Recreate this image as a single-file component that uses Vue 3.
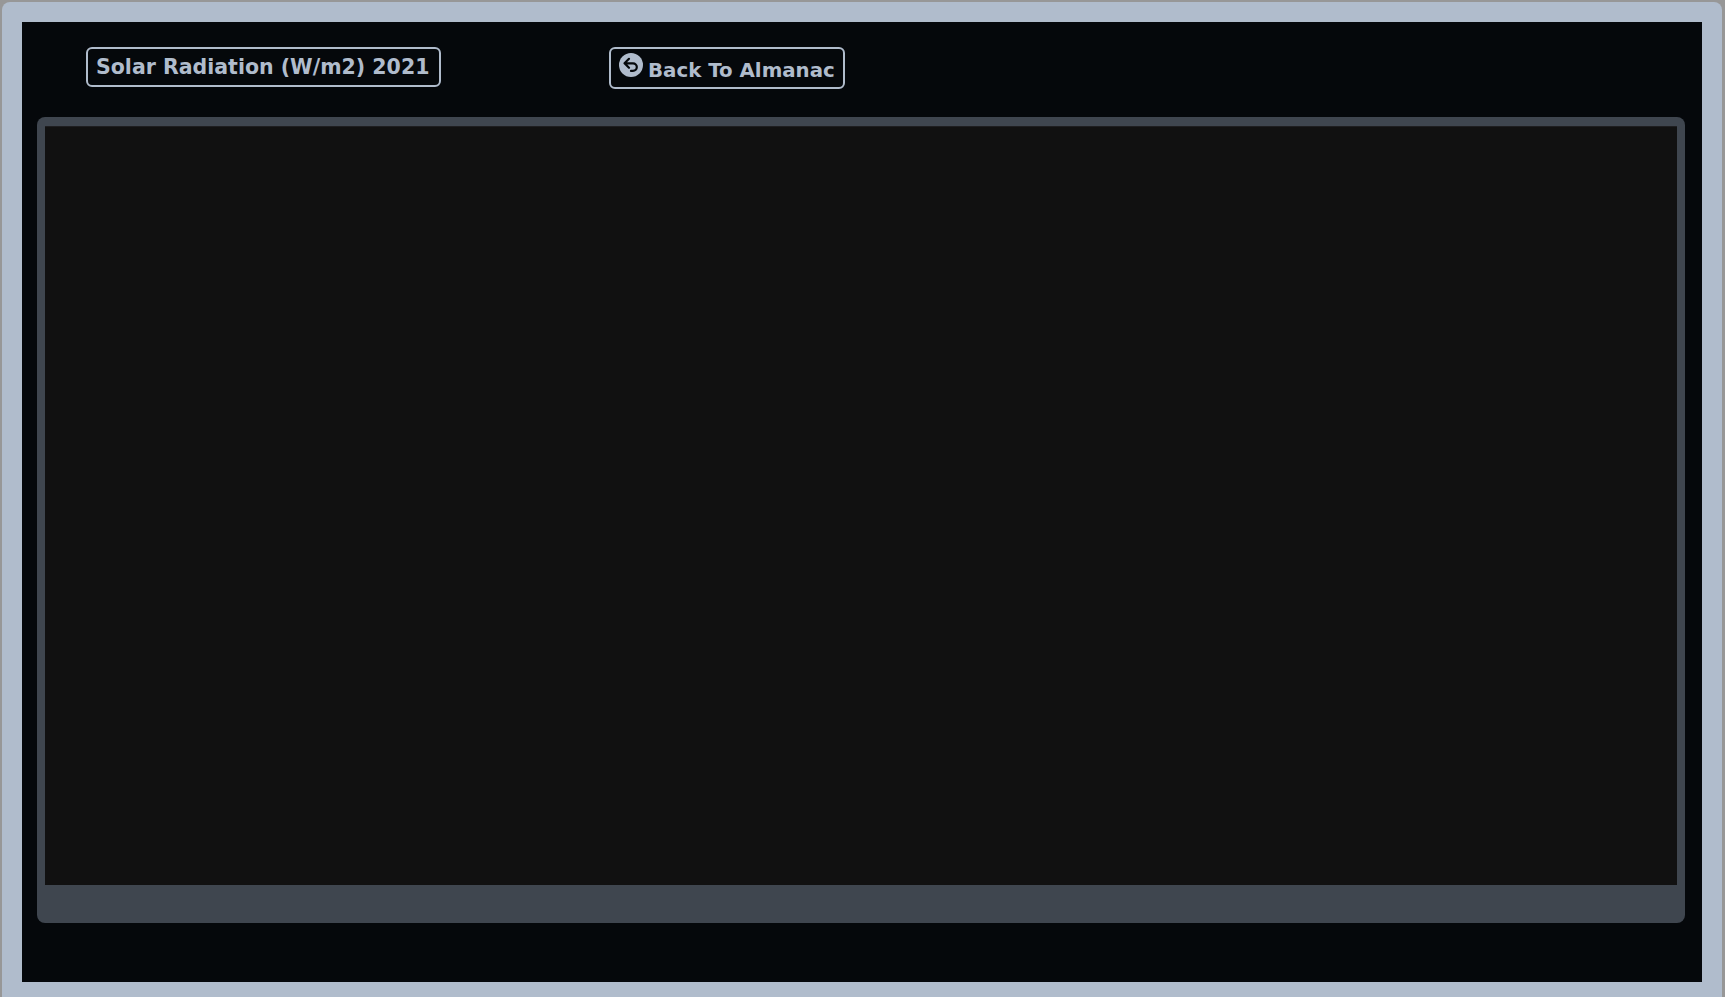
<script setup>
const title = 'Solar Radiation (W/m2) 2021'
</script>

<template>
  <div class="page">
    <div class="frame">
      <div class="inner">
        <div class="topbar">
          <div class="chip title">{{ title }}</div>
          <a class="chip back">
            <svg class="icon" viewBox="0 0 24 24" width="24" height="24">
              <circle cx="12" cy="12" r="12" fill="#b0bccc" />
              <path d="M10 5.8 5.5 10.3l4.5 4.5M6 10.3h8a3.8 3.8 0 0 1 0 7.6h-2" fill="none" stroke="#05080b" stroke-width="2.2" stroke-linecap="round" stroke-linejoin="round" />
            </svg>
            <span class="back-text">Back To Almanac</span>
          </a>
        </div>
        <div class="panel">
          <div class="canvas"></div>
        </div>
      </div>
    </div>
  </div>
</template>

<style>
html, body { margin: 0; background: #979797; overflow: hidden; }
</style>

<style scoped>
.page {
  width: 1725px;
  height: 997px;
  box-sizing: border-box;
  padding: 2px 3px 0 2px;
}
.frame {
  height: 100%;
  box-sizing: border-box;
  padding: 20px 20px 15px 20px;
  background: #b0bccc;
  border-radius: 8px 8px 0 0;
}
.inner {
  height: 100%;
  box-sizing: border-box;
  background: #05080b;
  padding: 25px 17px 0 15px;
}
.topbar {
  display: flex;
  align-items: flex-start;
  gap: 168px;
  padding-left: 49px;
  height: 70px;
}
.chip {
  box-sizing: border-box;
  border: 2px solid #b0bccc;
  border-radius: 6px;
  color: #b0bccc;
  font-family: "DejaVu Sans", sans-serif;
  font-weight: 700;
  white-space: nowrap;
}
.title {
  width: 355px;
  height: 40px;
  padding-left: 8px;
  font-size: 20.5px;
  line-height: 37px;
}
.back {
  display: flex;
  align-items: flex-start;
  width: 236px;
  height: 42px;
  padding: 4px 0 0 8px;
  gap: 5px;
}
.icon { flex: none; }
.back-text {
  font-size: 19.8px;
  line-height: 30px;
  margin-top: 3px;
}
.panel {
  height: 806px;
  box-sizing: border-box;
  padding: 9px 8px 38px 8px;
  background: #3f464f;
  border-radius: 8px;
}
.canvas {
  height: 100%;
  background: #111111;
  border-top: 1px solid #1e1e20;
  box-sizing: border-box;
}
</style>
